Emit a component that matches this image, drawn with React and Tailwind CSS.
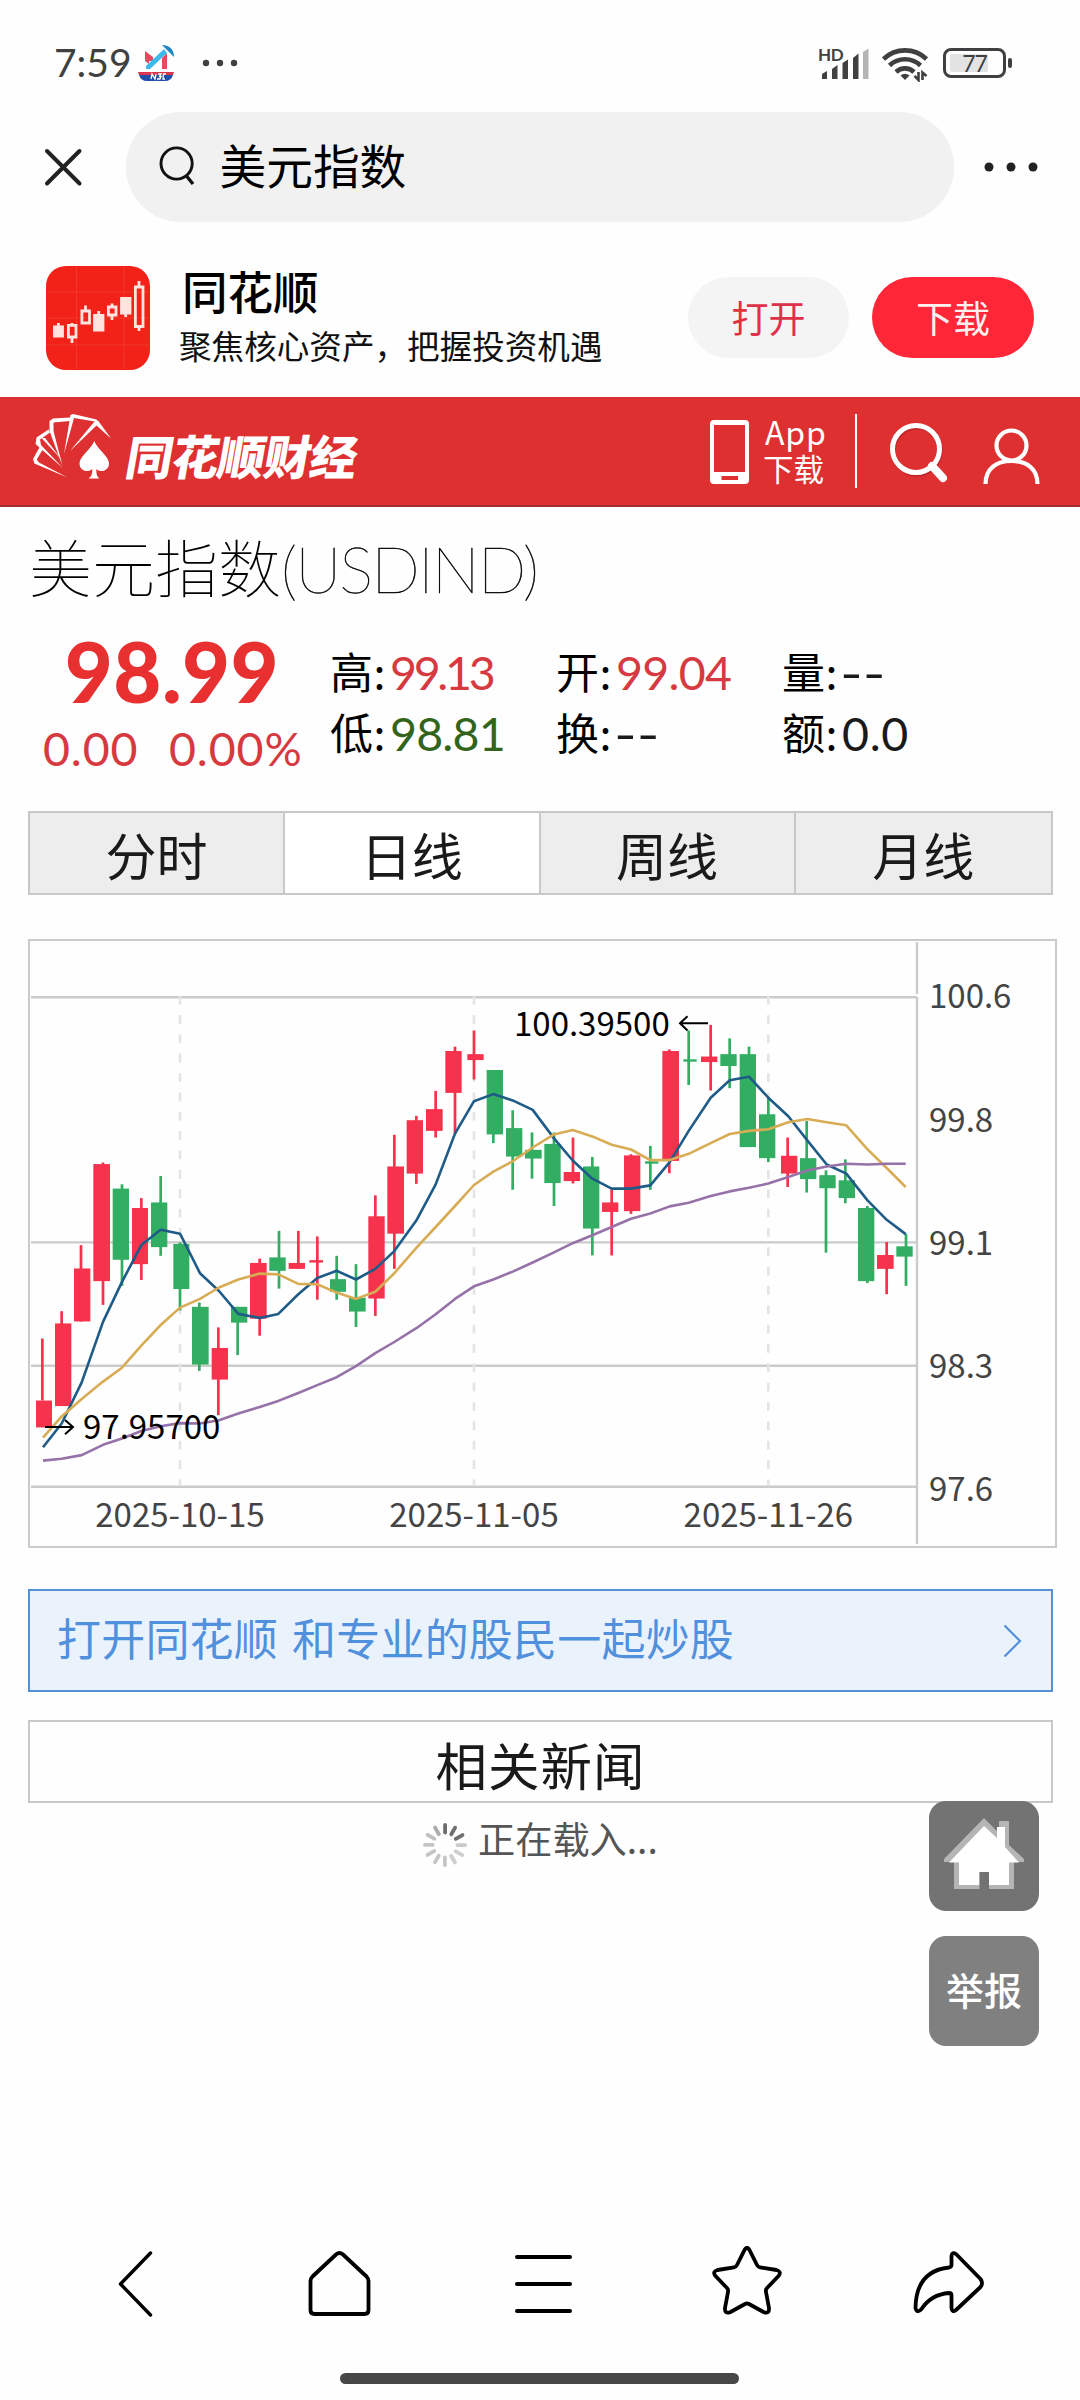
import React from "react";

const CJK = "font-['Noto_Sans_CJK_SC',sans-serif]";
const NUM = "font-['Lato','Noto_Sans_CJK_SC',sans-serif]";

/* ---------- chart data: [wickX, high, low, bodyLeft, bodyWidth, open/close top, bottom, up] ---------- */
const candles = [
  [67, 1033, 1190, 48, 48, 1190, 1258, 1], [125, 964, 1204, 105, 49, 995, 1204, 1], [183, 797, 990, 162, 49, 856, 990, 1],
  [249, 588, 948, 220, 50, 592, 888, 1], [306, 643, 900, 278, 49, 654, 834, 0], [364, 678, 885, 336, 48, 703, 845, 1],
  [422, 622, 824, 393, 49, 689, 802, 0], [480, 790, 962, 460, 48, 794, 908, 0], [538, 942, 1115, 516, 50, 953, 1099, 0],
  [595, 1005, 1227, 575, 49, 1057, 1137, 1], [653, 953, 1075, 633, 49, 953, 993, 0], [719, 831, 1026, 690, 50, 842, 983, 1],
  [777, 761, 907, 748, 49, 828, 862, 0], [835, 761, 857, 806, 49, 842, 857, 1], [892, 775, 935, 868, 41, 835, 841, 1],
  [950, 824, 935, 930, 48, 883, 915, 0], [1008, 845, 1004, 987, 50, 930, 965, 0], [1066, 671, 976, 1045, 49, 724, 932, 1],
  [1123, 518, 857, 1102, 50, 598, 768, 1], [1189, 470, 642, 1160, 49, 481, 616, 1], [1247, 407, 525, 1218, 50, 453, 508, 1],
  [1305, 295, 515, 1276, 49, 306, 412, 1], [1362, 254, 378, 1342, 49, 314, 329, 1], [1420, 354, 539, 1400, 49, 354, 517, 0],
  [1478, 456, 657, 1458, 49, 501, 573, 0], [1536, 512, 629, 1515, 50, 556, 578, 0], [1602, 512, 698, 1573, 49, 541, 640, 0],
  [1659, 525, 641, 1631, 49, 612, 635, 1], [1717, 574, 823, 1689, 49, 598, 755, 0], [1775, 655, 823, 1746, 49, 689, 713, 1],
  [1833, 567, 718, 1812, 49, 570, 711, 1], [1891, 546, 657, 1875, 40, 585, 591, 0], [1948, 302, 615, 1927, 50, 306, 584, 1],
  [2006, 254, 392, 1990, 40, 327, 333, 0], [2072, 240, 406, 2043, 49, 320, 334, 1], [2129, 274, 400, 2101, 49, 314, 344, 0],
  [2187, 295, 549, 2159, 49, 314, 549, 0], [2245, 424, 587, 2217, 49, 466, 577, 0], [2303, 525, 650, 2283, 49, 571, 616, 1],
  [2360, 483, 664, 2340, 49, 577, 630, 0], [2418, 608, 816, 2398, 49, 620, 653, 0], [2476, 580, 691, 2456, 49, 633, 678, 0],
  [2542, 698, 893, 2514, 49, 703, 888, 0], [2600, 789, 921, 2571, 50, 822, 857, 1], [2658, 769, 900, 2629, 49, 800, 826, 0],
];
const xs = [69, 125, 185, 249, 306, 364, 422, 480, 540, 597, 655, 719, 775, 835, 892, 950, 1008, 1066, 1123, 1189, 1247, 1305, 1362, 1420, 1478, 1538, 1602, 1658, 1717, 1775, 1833, 1891, 1949, 2006, 2072, 2129, 2187, 2245, 2305, 2362, 2420, 2479, 2542, 2600, 2657];
const ma5 = [1308, 1248, 1144, 991, 890, 797, 758, 768, 868, 913, 971, 981, 971, 921, 880, 862, 884, 857, 812, 735, 643, 515, 433, 415, 431, 455, 527, 583, 629, 654, 654, 646, 587, 508, 424, 380, 371, 424, 471, 532, 593, 616, 683, 733, 769];
const ma10 = [1284, 1230, 1186, 1142, 1107, 1051, 999, 955, 933, 904, 884, 869, 871, 895, 896, 917, 933, 915, 868, 804, 751, 698, 645, 611, 585, 550, 517, 506, 522, 543, 555, 582, 582, 566, 539, 516, 508, 504, 486, 478, 486, 494, 554, 602, 650];
const ma30 = [1342, 1337, 1328, 1302, 1286, 1267, 1255, 1247, 1248, 1240, 1223, 1206, 1191, 1171, 1151, 1131, 1103, 1070, 1042, 1007, 972, 933, 901, 884, 864, 841, 815, 792, 772, 751, 730, 717, 699, 690, 673, 661, 652, 641, 625, 608, 598, 591, 593, 591, 591];

const X = (v) => v / 3 - 10;
const Y = (v) => v / 2.529 - 11;
const line = (ys) => xs.map((x, i) => `${X(x).toFixed(1)},${Y(ys[i]).toFixed(1)}`).join(" ");

function Chart() {
  return (
    <div className="ml-[28px] mt-[44px] h-[609px] w-[1029px] border-2 border-[#cbcbcb]">
      <svg width="1025" height="605" viewBox="0 0 1025 605" className={`block ${CJK}`}>
        <g stroke="#cbcbcb" strokeWidth="2.4">
          {[170, 790, 1102, 1408].map((y) => (
            <line key={y} x1="1" x2="887" y1={Y(y)} y2={Y(y)} />
          ))}
          <line x1="887" x2="887" y1="1" y2="53" />
          <line x1="887" x2="887" y1="56" y2="603" />
        </g>
        <g stroke="#e4e4e4" strokeWidth="2.6" strokeDasharray="8.7 10.65">
          {[480, 1362, 2245].map((x) => (
            <line key={x} x1={X(x)} x2={X(x)} y1="54.8" y2="545" />
          ))}
        </g>
        {candles.map(([x, hi, lo, bl, bw, t, b, up]) => (
          <g key={x} fill={up ? "#f7324c" : "#32ae63"}>
            <rect x={X(x) - 1.35} y={Y(hi)} width="2.7" height={Y(lo) - Y(hi)} />
            <rect x={X(bl)} y={Y(t)} width={bw / 3} height={Y(b) - Y(t)} />
          </g>
        ))}
        <g fill="none" strokeWidth="2.6" strokeLinejoin="round">
          <polyline points={line(ma5)} stroke="#1f5b87" />
          <polyline points={line(ma10)} stroke="#d8ac55" />
          <polyline points={line(ma30)} stroke="#9672a8" />
        </g>
        <g fill="none" stroke="#000" strokeWidth="2">
          <path d={`M15 ${Y(1257)}H43M35 ${Y(1239)}L43 ${Y(1257)}L35 ${Y(1275)}`} />
          <path d={`M678 ${Y(236)}H650M657.500 ${Y(218)}L650 ${Y(236)}L657.500 ${Y(254)}`} />
        </g>
        <g fontSize="33" fill="#000">
          <text x="53" y={Y(1288)}>97.95700</text>
          <text x="484" y={Y(267)}>100.39500</text>
        </g>
        <g fontSize="33" fill="#444">
          <text x={X(480)} y={Y(1511)} textAnchor="middle">2025-10-15</text>
          <text x={X(1362)} y={Y(1511)} textAnchor="middle">2025-11-05</text>
          <text x={X(2245)} y={Y(1511)} textAnchor="middle">2025-11-26</text>
          {[["100.6", 198], ["99.8", 510], ["99.1", 821], ["98.3", 1132], ["97.6", 1443]].map(([t, y]) => (
            <text key={t} x="899" y={Y(y)}>{t}</text>
          ))}
        </g>
      </svg>
    </div>
  );
}

function StatusBar() {
  return (
    <div className="flex h-[112px] items-start text-[#404040]">
      <div className={`ml-[54px] mt-[43px] w-[84px] whitespace-nowrap text-[39px] leading-none ${NUM}`}>7:59</div>
      <svg className="mt-[45px]" width="36" height="36" viewBox="0 0 36 36">
        <path d="M7 6L15 12V16H11V19L7 16Z" fill="#e64a5f" />
        <path d="M24 13L29 8V24H24Z" fill="#e64a5f" />
        <path d="M8 21L26 4L29 8L12 24H8Z" fill="#3cb9ec" />
        <path d="M24 0C31 0 36 4 36 12L30 6Z" fill="#1b87c4" />
        <path d="M0 27H36L35 30H1Z" fill="#dd3550" />
        <path d="M1 30H35Q33 36 27 36H9Q3 36 1 30Z" fill="#1f4fa8" />
        <path d="M13 34L14 29L17 34L18 29M20 29H23L21.500 31.500H23L22 34H19M28 29H25.500L25 34H27" stroke="#fff" strokeWidth="1.300" fill="none" />
      </svg>
      <svg className="ml-[28px] mt-[59px]" width="38" height="8" fill="#404040">
        <circle cx="4" cy="4" r="3.200" /><circle cx="18" cy="4" r="3.200" /><circle cx="32" cy="4" r="3.200" />
      </svg>
      <div className="ml-auto mr-[68px] mt-[44px] flex h-[38px] items-start">
        <div className="relative h-[38px] w-[50px]">
          <span className={`absolute -left-px top-[2px] text-[17px] font-bold leading-none tracking-[-0.3px] ${NUM}`}>HD</span>
          <svg className="absolute left-0 top-0" width="50" height="38" fill="#404040">
            <path d="M3 35V30L8 27V35Z" /><path d="M13 35V25L18.500 21V35Z" /><path d="M23.500 35V19L29 15.500V35Z" />
            <path d="M34 35V14L39.500 9.500V35Z" /><path d="M44 35V8L49.500 4.500V35Z" fill="#b4b4b4" />
          </svg>
        </div>
        <svg className="ml-[13px]" width="46" height="38" fill="none" stroke="#404040" strokeWidth="4.600">
          <path d="M1.500 15A31 31 0 0 1 44.500 15" /><path d="M7.500 21.500A22.500 22.500 0 0 1 38.500 21.500" /><path d="M14 28A13 13 0 0 1 32 28" />
          <path d="M18.500 31.500Q23 28 27.500 31.500L23 36Z" fill="#404040" stroke="none" />
          <path d="M36.500 28V36L32.500 31.800M40.500 36V28.500L44.500 32" strokeWidth="2.600" />
        </svg>
        <div className="relative ml-[15px] mt-[4px] flex h-[30px] w-[63px] items-center justify-center rounded-[8px] border-[3px] border-[#404040]">
          <span className="absolute left-[4px] top-[3px] h-[18px] w-[38px] rounded-[2px] bg-[#e3e3e3]" />
          <span className={`relative text-[23px] leading-none tracking-[-1px] ${NUM}`}>77</span>
        </div>
        <span className="ml-[2px] mt-[14px] h-[10px] w-[4px] rounded-[2px] bg-[#404040]" />
      </div>
    </div>
  );
}

function SearchRow() {
  return (
    <div className="flex h-[110px] items-center">
      <svg className="ml-[43px]" width="40" height="40" stroke="#222" strokeWidth="4" strokeLinecap="round">
        <path d="M4 4L36.500 36.500M36.500 4L4 36.500" />
      </svg>
      <div className="ml-[43px] flex h-[110px] w-[828px] items-center rounded-full bg-[#f1f1f1]">
        <svg className="ml-[32px]" width="38" height="42" fill="none" stroke="#111" strokeWidth="2.900">
          <circle cx="18.600" cy="17.500" r="15.600" /><path d="M28.500 30L35 38" strokeWidth="3.400" />
        </svg>
        <div className={`ml-[23.500px] pb-[5px] text-[46.700px] leading-none text-black ${CJK}`}>美元指数</div>
      </div>
      <svg className="ml-[30px]" width="54" height="10" fill="#222">
        <circle cx="5" cy="5" r="4.500" /><circle cx="27" cy="5" r="4.500" /><circle cx="49" cy="5" r="4.500" />
      </svg>
    </div>
  );
}

function AppBanner() {
  return (
    <div className={`flex h-[175px] items-start ${CJK}`}>
      <svg className="ml-[46px] mt-[44px]" width="104" height="104" viewBox="0 0 104 104">
        <rect width="104" height="104" rx="20" fill="#f22218" />
        <path d="M30.500 1V103M78 1V103M1 26H103M1 52H103M1 79H103" stroke="#f5362c" strokeWidth="1" />
        <g fill="#ffe3df" stroke="#ffe3df" strokeWidth="2.800">
          <path d="M8.400 61H16.500V70H8.400ZM12.400 57V61M48.500 49.500H57V64H48.500ZM52.700 45V49M75.500 32.500H84V47H75.500ZM79.700 48V51" />
          <g fill="none">
            <path d="M22.400 59.400H30V71H22.400ZM26 71V77M26 57V59M35.900 45H43.500V57H35.900ZM39.500 39.500V45M62.400 41H70V49H62.400ZM66 37.500V41M66 49V54" />
            <path d="M89.400 21H97V60.500H89.400ZM93 15V21M93 61V65" />
          </g>
        </g>
      </svg>
      <div className="ml-[32px] mt-[46px] w-[440px]">
        <div className="text-[45.500px] font-medium leading-none text-black">同花顺</div>
        <div className="-ml-[3px] mt-[15px] whitespace-nowrap text-[32.600px] leading-none text-[#111]">聚焦核心资产，把握投资机遇</div>
      </div>
      <div className="ml-[66px] mt-[55px] flex h-[81px] w-[161px] items-center justify-center rounded-full bg-[#f4f4f4] text-[37px] leading-none text-[#e0304a]">打开</div>
      <div className="ml-[23px] mt-[55px] flex h-[81px] w-[162px] items-center justify-center rounded-full bg-[#fe2637] text-[37px] leading-none text-[#fff0f0]">下载</div>
    </div>
  );
}

function SiteHeader() {
  return (
    <div className={`flex h-[110px] items-start border-b-2 border-[#a52c30] bg-[#de3031] text-white ${CJK}`}>
      <svg className="ml-[33px] mt-[17px]" width="80" height="66" viewBox="0 0 80 66" fill="#fff">
        <path d="M34.500 63.500L1.300 49.500L0 45L7 32.500L10 35L3.800 45.500L6 48.500Z" />
        <path d="M30.300 54.500L2.500 30L3.500 23.500L15.500 15.500L17 18.500L7 25.500L8 31Z" />
        <path d="M29 46L8.500 24L12 24Z" />
        <path d="M29.500 52L16.500 17L16.500 7L20 4.500L37 3.500V7L20.500 8.500V17Z" />
        <path d="M31 40L37.500 1L40 0L63.500 5.500L65 8L41 4Z" />
        <path d="M37 37L61.500 7.500L65 6.500L78 24.500L63.500 11.500Z" />
        <path d="M61.300 27C64 35 76 42 76 49.500C76 57 67.500 59 63.300 55C63.300 60 64 62.500 66.500 64.500H55.500C58.500 62.500 59.300 60 59.300 55C55 59 46.500 57 46.500 49.500C46.500 42 58.500 35 61.300 27Z" />
      </svg>
      <div className="ml-[14px] mt-[34px] w-[240px] -skew-x-[10deg] whitespace-nowrap text-[47px] font-black leading-none tracking-[-1px]">同花顺财经</div>
      <svg className="ml-[343px] mt-[23px]" width="39" height="65">
        <path fillRule="evenodd" fill="#fff" d="M4 0H35Q39 0 39 4V60Q39 64 35 64H4Q0 64 0 60V4Q0 0 4 0ZM4 5V52H35V5ZM11.500 56V60H28V56Z" />
      </svg>
      <div className="ml-[14px] mt-[16px] w-[64px]">
        <div className="pl-[2px] text-[32px] leading-[36px] tracking-[0.800px]">App</div>
        <div className="mt-[3px] whitespace-nowrap text-[30.500px] leading-[32px]">下载</div>
      </div>
      <div className="ml-[28px] mt-[17px] h-[74px] w-[2px] bg-white" />
      <svg className="ml-[32px] mt-[25px]" width="62" height="66" fill="none" stroke="#fff" strokeWidth="5">
        <circle cx="27" cy="27" r="23.500" stroke="#a52227" opacity="0.600" transform="translate(0.800 1.500)" />
        <circle cx="27" cy="27" r="23.500" />
        <path d="M43 44L54 56" strokeWidth="8" strokeLinecap="round" />
      </svg>
      <svg className="ml-[32px] mt-[31px]" width="58" height="58" fill="none" stroke="#fff" strokeWidth="4.200">
        <circle cx="28.500" cy="17.500" r="15" /><path d="M2.500 56C2.500 41 13 33 28.500 33C44 33 54.500 41 54.500 56" />
      </svg>
    </div>
  );
}

function Cell({ label, value, tone }) {
  return (
    <div className="flex h-[61px] w-[226px] items-start whitespace-nowrap">
      <span className={`mt-[5px] w-[60px] text-[43px] leading-none tracking-[0.500px] text-black ${CJK}`}>{label}:</span>
      <span className={`mt-[5px] text-[46.500px] leading-none ${tone} ${NUM}`}>{value}</span>
    </div>
  );
}

function Quote() {
  return (
    <>
      <div className="flex h-[113px] items-start whitespace-nowrap pl-[29px] pt-[26px] font-thin text-black">
        <span className={`text-[63px] leading-none ${CJK}`}>美元指数</span>
        <span className={`pt-[4px] text-[64px] leading-none tracking-[-1.900px] [-webkit-text-stroke:0.5px_#000] ${NUM}`}>(USDIND)</span>
      </div>
      <div className={`flex h-[191px] items-start ${NUM}`}>
        <div className="ml-[28px] flex w-[302px] flex-col whitespace-nowrap">
          <div className="mt-[10px] w-[288px] text-center text-[83px] font-black leading-none tracking-[0.400px] text-[#e93031]">98.99</div>
          <div className="mt-[12px] flex pl-[15px] text-[46.500px] leading-none tracking-[0.900px] text-[#d63a40]">
            <span className="w-[126px]">0.00</span>
            <span>0.00%</span>
          </div>
        </div>
        <div className="mt-[24px] flex">
          <div>
            <Cell label="高" value="99.13" tone="text-[#d63a40] tracking-[-3.300px]" />
            <Cell label="低" value="98.81" tone="text-[#32651b] tracking-[-0.800px]" />
          </div>
          <div>
            <Cell label="开" value="99.04" tone="text-[#d63a40] tracking-[-0.700px]" />
            <Cell label="换" value="--" tone="text-[#1a1a1a] origin-left scale-x-[1.32] -ml-[2px]" />
          </div>
          <div>
            <Cell label="量" value="--" tone="text-[#1a1a1a] origin-left scale-x-[1.32] -ml-[2px]" />
            <Cell label="额" value="0.0" tone="text-[#1a1a1a] tracking-[0.700px]" />
          </div>
        </div>
      </div>
    </>
  );
}

function Tabs() {
  return (
    <div className={`ml-[28px] grid h-[84px] w-[1025px] grid-cols-4 border-2 border-[#c8c8c8] text-[51px] text-[#1a1a1a] ${CJK}`}>
      {["分时", "日线", "周线", "月线"].map((t) => (
        <div
          key={t}
          className={`flex items-center justify-center border-r-2 border-[#c8c8c8] pt-[3px] leading-none last:border-r-0 ${t === "日线" ? "bg-white" : "bg-[#ededed]"}`}
        >
          {t}
        </div>
      ))}
    </div>
  );
}

const shades = [0.62, 0.6, 0.6, 0.22, 0.2, 0.2, 0.24, 0.24, 0.24, 0.24, 0.26, 0.34];

function News() {
  return (
    <div className={CJK}>
      <div className="ml-[28px] mt-[41px] flex h-[103px] w-[1025px] items-center justify-between border-2 border-[#5590d2] bg-[#eaf3fc] pl-[27px] pr-[29px] text-[#5190dd]">
        <span className="pb-[8px] text-[44px] leading-none tracking-[0.200px] [word-spacing:4px]">打开同花顺 和专业的股民一起炒股</span>
        <svg width="20" height="34" fill="none" stroke="#5190dd" strokeWidth="2.200">
          <path d="M2.500 1.500L18 17L2.500 32.500" />
        </svg>
      </div>
      <div className="ml-[28px] mt-[28px] flex h-[83px] w-[1025px] items-center justify-center border-2 border-[#c8c8c8] pt-[5px] text-[51.500px] leading-none tracking-[1px] text-[#1a1a1a]">相关新闻</div>
      <div className="flex items-start pt-[17px] text-[#555]">
        <svg className="ml-[421px] mt-[1px]" width="48" height="48" viewBox="-24 -24 48 48">
          {shades.map((o, i) => (
            <rect key={i} x="-1.800" y="-22" width="3.800" height="11.500" rx="1.900" fill="#111" opacity={o} transform={`rotate(${i * 30})`} />
          ))}
        </svg>
        <div className="ml-[9px] text-[37.200px] leading-none">正在载入...</div>
      </div>
    </div>
  );
}

function FloatingButtons() {
  return (
    <div className="absolute left-[929px] top-[1801px] flex w-[110px] flex-col gap-[25px]">
      <div className="h-[110px] rounded-[17px] bg-[#737373]">
        <svg width="110" height="110">
          <path d="M55 17L70 32V20H80V44L95 58V61H85V88H25V61H15V58Z" fill="#b5b5b5" />
          <path d="M55 25L68 37V26H76V46L90 61.500H80V84H60V71H50.500V84H30V61.500H20Z" fill="#fff" />
          <path d="M50.500 71H60V88H50.500Z" fill="#737373" />
        </svg>
      </div>
      <div className={`flex h-[110px] items-center justify-center rounded-[17px] bg-[#808080] pb-[4px] text-[38px] font-medium leading-none text-white ${CJK}`}>举报</div>
    </div>
  );
}

function BottomNav() {
  return (
    <>
      <div className="mt-auto flex h-[80px] items-start pl-[100px]">
        <svg className="ml-[16px] mt-[4px] shrink-0" width="40" height="70" fill="none" stroke="#000" strokeWidth="3.400" strokeLinecap="round" strokeLinejoin="round">
          <path d="M34.500 5L4.500 36L34.500 67" />
        </svg>
        <svg className="ml-[150px] mt-[5px] shrink-0" width="68" height="70" fill="none" stroke="#000" strokeWidth="3.800" strokeLinejoin="round">
          <path d="M4.500 61V32Q4.500 29.500 6.500 27.500L30 5.500Q33.500 2.500 37 5.500L60.500 27.500Q62.500 29.500 62.500 32V61Q62.500 65 58.500 65H8.500Q4.500 65 4.500 61Z" />
        </svg>
        <svg className="ml-[139px] mt-[5px] shrink-0" width="62" height="70" stroke="#000" strokeWidth="4" strokeLinecap="round">
          <path d="M4 8H57M4 35H57M4 62H57" />
        </svg>
        <svg className="ml-[135px] mt-[2px] shrink-0" width="74" height="74" fill="none" stroke="#000" strokeWidth="3.800" strokeLinejoin="round">
          <path d="M34.500 4Q37 -0.500 39.500 4L47 19Q48 21 50 21.300L66.500 24Q72 25.500 68.500 30L57 42Q55.500 43.500 56 46L59 62Q59.500 68.500 53.500 66L39 58Q37 57 35 58L20.500 66Q14.500 68.500 15 62L18 46Q18.500 43.500 17 42L5.500 30Q2 25.500 7.500 24L24 21.300Q26 21 27 19Z" />
        </svg>
        <svg className="ml-[127px] mt-[5px] shrink-0" width="76" height="70" fill="none" stroke="#000" strokeWidth="3.800" strokeLinejoin="round">
          <path d="M40.500 7Q41 2.500 45 5L69.500 30Q72.500 34 69.500 38L45 61Q41 64 40.500 59V46.500Q40.500 44 38 44Q20 45.500 10.500 60Q6 65 4.500 59Q5 22 38 18.500Q40.500 18 40.500 16Z" />
        </svg>
      </div>
      <div className="mb-[16px] ml-[340px] mt-[49px] h-[11px] w-[399px] shrink-0 rounded-full bg-[#474747]" />
    </>
  );
}

export default function App() {
  return (
    <div className="relative flex h-[2400px] w-[1080px] flex-col overflow-hidden bg-[#fefefe]">
      <StatusBar />
      <SearchRow />
      <AppBanner />
      <SiteHeader />
      <Quote />
      <Tabs />
      <Chart />
      <News />
      <BottomNav />
      <FloatingButtons />
    </div>
  );
}
